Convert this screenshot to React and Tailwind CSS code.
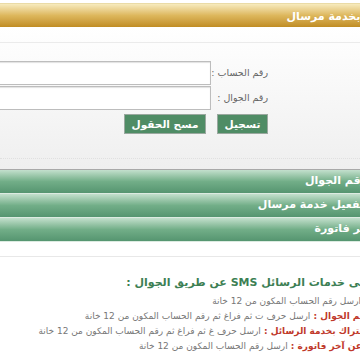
const bars = [
  { label: 'رقم الجوال', cut: 'mr-[-7px]' },
  { label: 'تفعيل خدمة مرسال', cut: 'mr-[-4px]' },
  { label: 'آخر فاتورة', cut: 'mr-[-12px]' },
];

const smsLines = [
  { label: '', text: 'ارسل رقم الحساب المكون من 12 خانة', cut: 'mr-[-1px]' },
  { label: 'رقم الجوال :', text: 'ارسل حرف ت ثم فراغ ثم رقم الحساب المكون من 12 خانة', cut: 'mr-[-11px]' },
  { label: 'الاشتراك بخدمة الرسائل :', text: 'ارسل حرف غ ثم فراغ ثم رقم الحساب المكون من 12 خانة', cut: 'mr-[-18px]' },
  { label: 'عن آخر فاتورة :', text: 'ارسل رقم الحساب المكون من 12 خانة', cut: 'mr-[-2px]' },
];

const FormRow = ({ label }) => (
  <div className="flex h-[24px] items-center gap-[2px] pr-[92px]">
    <label className="w-[55px] shrink-0 whitespace-nowrap text-[9.5px] text-[#666]">{label}</label>
    <input
      type="text"
      className="h-[24px] w-[260px] shrink-0 border border-[#bdbdbd] bg-white shadow-[inset_0_1px_1px_rgba(0,0,0,0.12)] outline-none"
    />
  </div>
);

export default function App() {
  return (
    <div
      dir="rtl"
      className="w-[360px] h-[360px] overflow-hidden bg-white"
      style={{ fontFamily: '"DejaVu Sans", sans-serif' }}
    >
      {/* header */}
      <div className="mt-[3px] flex h-[24px] items-center border-t border-[#eadba6] bg-gradient-to-b from-[#f7ebbd] via-[#ddb75c] to-[#c08d22] pt-[4px]">
        <span className="mr-[-50px] whitespace-nowrap text-[11px] font-bold text-white">
          التسجيل بخدمة مرسال
        </span>
      </div>

      {/* form panel */}
      <div className="h-[142px] bg-gradient-to-b from-white to-[#efefef]">
        <div className="h-[16px] border-b border-[#ebebeb]" />
        <div className="flex flex-col gap-[1px] pt-[18px]">
          <FormRow label="رقم الحساب :" />
          <FormRow label="رقم الجوال :" />
          <div className="mt-[3px] flex gap-[11px] pr-[92px]">
            <button className="h-[20px] w-[51px] whitespace-nowrap border border-[#9aa89f] bg-[#4f8c65] text-[10.5px] font-bold leading-none text-white">
              تسجيل
            </button>
            <button className="h-[20px] w-[82px] whitespace-nowrap border border-[#9aa89f] bg-[#4f8c65] text-[10.5px] font-bold leading-none text-white">
              مسح الحقول
            </button>
          </div>
        </div>
        <div className="mt-[24px] border-b border-dotted border-[#e0e0e0]" />
      </div>

      {/* green bars */}
      <div className="border-t border-[#a9a9a9]">
        {bars.map((b) => (
          <div
            key={b.label}
            className="flex h-[24px] items-center border-b border-[#dcebe1] bg-gradient-to-b from-[#c3e0cd] via-[#72ae88] to-[#559570]"
          >
            <span className={`${b.cut} whitespace-nowrap text-[11px] font-bold text-white`}>{b.label}</span>
          </div>
        ))}
      </div>

      {/* sms info */}
      <div className="h-[14px]" />
      <div className="border-t border-[#e8e8e8] pt-[16px]">
        <h3 className="mr-[-12px] whitespace-nowrap text-[11px] font-bold leading-[20px] text-[#3d7f54]">
          على خدمات الرسائل SMS عن طريق الجوال :
        </h3>
        <ul className="mt-[1px] flex flex-col gap-[1px]">
          {smsLines.map((l, i) => (
            <li key={i} className={`${l.cut} whitespace-nowrap text-[9px] leading-[14px] text-[#777]`}>
              {l.label && <span className="font-bold text-[#c0392b]">{l.label} </span>}
              {l.text}
            </li>
          ))}
        </ul>
      </div>
    </div>
  );
}
